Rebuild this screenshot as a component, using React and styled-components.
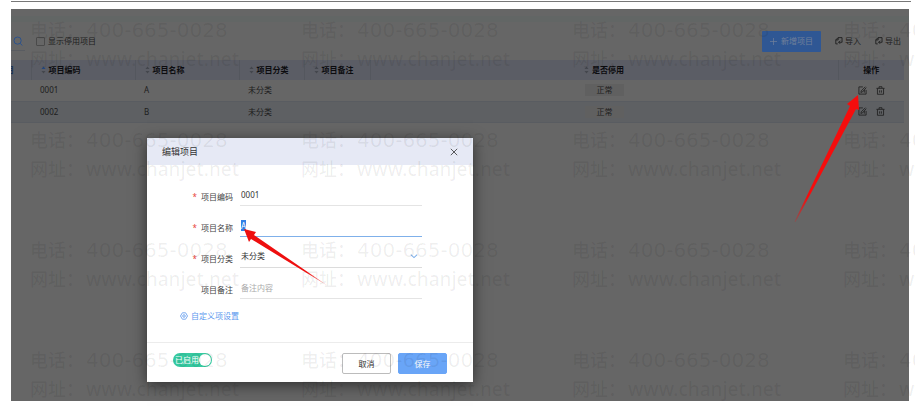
import React from 'react';
import styled, { createGlobalStyle } from 'styled-components';

const GlobalStyle = createGlobalStyle`
  * { box-sizing: border-box; }
  body {
    margin: 0;
    background: #fff;
    color: #1d1d1d;
    font: 8px/12px "Noto Sans", "Noto Sans CJK SC", sans-serif;
    overflow: hidden;
  }
  button, input, select { font: inherit; color: inherit; }
`;

const Page = styled.div`
  position: relative;
  min-height: 100vh;
  padding: 1px 4px 5px 11px;
  display: flex;
  flex-direction: column;
  overflow: hidden;
`;

const TopRule = styled.hr`
  width: 100%;
  height: 1px;
  margin: 0 0 7px;
  border: 0;
  background: #777;
  flex: none;
`;

const Screen = styled.main`
  position: relative;
  flex: 1;
  margin-right: 2px;
  background: #666;
`;

const TitleStrip = styled.div`
  height: 13px;
  border-bottom: 6px solid #626665;
`;

const Toolbar = styled.div`
  display: flex;
  align-items: center;
  height: 38px;
  padding-right: 8px;
`;

const SearchButton = styled.button`
  display: flex;
  align-items: center;
  justify-content: flex-start;
  width: 14px;
  height: 20px;
  padding: 0 2px;
  border: 0;
  border-bottom: 1px solid #595c61;
  background: none;
  color: #2c528c;
`;

const CheckLabel = styled.label`
  display: flex;
  align-items: center;
  gap: 3px;
  margin: 0 auto 0 11px;
`;

const Checkbox = styled.input`
  appearance: none;
  width: 9px;
  height: 9px;
  margin: 0;
  border: 1px solid #4a4a4a;
  border-radius: 1px;
`;

const AddButton = styled.button`
  height: 21px;
  padding: 0 8px;
  display: flex;
  align-items: center;
  gap: 4px;
  margin-right: 4px;
  border: 0;
  border-radius: 1px;
  background: #2f5794;
  color: #71809a;
`;

const TextButton = styled.button`
  display: flex;
  align-items: center;
  gap: 2px;
  margin-left: 10px;
  padding: 0;
  border: 0;
  background: none;
  white-space: nowrap;
  & + & { margin-left: 14px; }
`;

const TableArea = styled.div`
  padding-right: 5px;
`;

const Table = styled.table`
  width: 100%;
  table-layout: fixed;
  border-collapse: collapse;
`;

const Col = styled.col`
  width: ${(p) => p.$w || 'auto'};
`;

const HeadRow = styled.tr`
  height: 20px;
  background: #5b5d65;
`;

const HeadCell = styled.th`
  padding: ${(p) => (p.$flush ? 0 : '0 0 0 9px')};
  text-align: ${(p) => (p.$center ? 'center' : 'left')};
  font-weight: 600;
  color: #0c0c0f;
  border-right: ${(p) => (p.$line ? '1px solid #54575e' : 0)};
  ${(p) => p.$center && 'padding-left: 0;'}
`;

const SortLabel = styled.span`
  display: flex;
  align-items: center;
  gap: 3px;
`;

const ClippedLabel = styled.span`
  display: flex;
  justify-content: flex-end;
  width: 3px;
  overflow: hidden;
  color: #1c3052;
`;

const BodyRow = styled.tr`
  height: 21px;
  background: ${(p) => (p.$alt ? '#5e6063' : '#666')};
  border-bottom: 1px solid #595c61;
`;

const Cell = styled.td`
  padding: 0 0 0 9px;
`;

const StatusTag = styled.span`
  display: block;
  width: 39px;
  margin-left: 1px;
  background: #606060;
  text-align: center;
`;

const RowActions = styled.div`
  display: flex;
  justify-content: center;
  gap: 9px;
  margin-left: -9px;
`;

const IconButton = styled.button`
  display: flex;
  padding: 0;
  border: 0;
  background: none;
`;

const Dialog = styled.section`
  position: absolute;
  top: 129px;
  left: 136px;
  width: 326px;
  background: #fff;
  color: #333;
  box-shadow: 0 3px 14px rgba(0, 0, 0, 0.55);
`;

const DialogHeader = styled.header`
  display: flex;
  align-items: center;
  justify-content: space-between;
  height: 27px;
  padding: 0 15px;
  background: #e6e9f5;
`;

const DialogTitle = styled.h2`
  margin: 0;
  font-size: 9px;
  font-weight: 400;
`;

const DialogBody = styled.div`
  display: flex;
  flex-direction: column;
  gap: 11px;
  padding: 21px 51px 20px 33px;
`;

const Field = styled.div`
  display: grid;
  grid-template-columns: 53px 1fr;
  column-gap: 7px;
  align-items: center;
  height: 20px;
`;

const FieldLabel = styled.label`
  text-align: right;
  color: #444;
  padding-top: 2px;
`;

const Required = styled.span`
  margin-right: 4px;
  color: #e8443c;
`;

const lineControl = `
  appearance: none;
  width: 100%;
  height: 20px;
  padding: 0 0 3px 1px;
  border: 0;
  border-radius: 0;
  outline: none;
  background: none;
`;

const TextInput = styled.input`
  ${lineControl}
  border-bottom: 1px solid ${(p) => (p.$active ? '#7fb0ea' : '#e4e4e4')};
  &::placeholder { color: #aaa; opacity: 1; }
  &::selection { background: #2f7fe6; color: #fff; }
`;

const SelectBox = styled.div`
  display: grid;
  align-items: center;
  & > * { grid-area: 1 / 1; }
  & > svg { justify-self: end; margin: 0 4px 4px 0; pointer-events: none; color: #7fb0ea; }
`;

const Select = styled.select`
  ${lineControl}
  border-bottom: 1px solid #dcdcdc;
`;

const SettingsLink = styled.a`
  display: flex;
  align-items: center;
  gap: 3px;
  height: 12px;
  color: #5b97ee;
  text-decoration: none;
`;

const DialogFooter = styled.footer`
  display: flex;
  align-items: center;
  gap: 7px;
  padding: 10px 26px 8px;
  border-top: 1px solid #ececec;
`;

const Switch = styled.label`
  display: flex;
  align-items: center;
  justify-content: space-between;
  width: 39px;
  height: 14px;
  margin: 0 auto 7px 0;
  padding: 0 1px 0 2px;
  border-radius: 7px;
  background: #36c9a0;
  color: #fff;
  white-space: nowrap;
`;

const SwitchInput = styled.input`
  appearance: none;
  flex: none;
  width: 12px;
  height: 12px;
  margin: 0;
  border-radius: 50%;
  background: #fff;
`;

const FooterButton = styled.button`
  width: 49px;
  height: 21px;
  padding: 0;
  border: 1px solid ${(p) => (p.$primary ? '#69a5f7' : '#bcbcbc')};
  border-radius: 2px;
  background: ${(p) => (p.$primary ? '#69a5f7' : '#fff')};
  color: ${(p) => (p.$primary ? '#fff' : '#333')};
`;

const Watermark = styled.div`
  position: absolute;
  top: 16px;
  left: 30px;
  display: grid;
  grid-template-columns: repeat(4, 271px);
  row-gap: 52px;
  color: rgba(0, 0, 0, 0.065);
  pointer-events: none;
  user-select: none;
`;

const Mark = styled.div`
  display: grid;
  grid-template-columns: 56px auto;
  grid-auto-rows: 29px;
  line-height: 29px;
  font-size: 18px;
  font-weight: 500;
  white-space: nowrap;
`;

const MarkPhone = styled.span`
  font-family: "DejaVu Sans", sans-serif;
  font-size: 20px;
`;

const MarkUrl = styled.span`
  font-size: 19px;
`;

const Arrows = styled.svg`
  position: absolute;
  top: 0;
  left: 0;
  pointer-events: none;
`;

const Icon = ({ size = 9, sw = 1, children }) => (
  <svg width={size} height={size} viewBox="0 0 10 10" fill="none" stroke="currentColor" strokeWidth={sw} aria-hidden="true">
    {children}
  </svg>
);

const SearchIcon = () => (
  <Icon size={10}><circle cx="4.6" cy="4.6" r="3.6" /><path d="M7.2 7.4 9.4 9.5" /></Icon>
);
const PlusIcon = () => <Icon size={7}><path d="M5 0v10M0 5h10" /></Icon>;
const TransferIcon = () => (
  <Icon size={8} sw={1.1}>
    <path d="M3.4 8.6H1V3.6L3.8.8H8.8V6.4M3.9 1v2.7H1M9 6.6H4.6M6.4 4.7 4.5 6.6 6.4 8.5" />
  </Icon>
);
const EditIcon = () => (
  <Icon size={9} sw={0.9}><path d="M5.4 1H1v8h8V4.4M3.2 7.2 3.6 5.4 8.2.8M5.2 6.4 9.2 1.8M3.2 7.2 5.2 6.4M7 4.4V7.4" /></Icon>
);
const TrashIcon = () => (
  <Icon size={9} sw={0.9}><path d="M.5 2.6h9M3.4 2.4V.8h3.2v1.6M1.6 2.8v6.4h6.8V2.8M4 4.8v2.6M6 4.8v2.6" /></Icon>
);
const CloseIcon = () => <Icon size={8}><path d="M1 1l8 8M9 1 1 9" /></Icon>;
const ChevronIcon = () => <Icon size={8} sw={1.3}><path d="M1 3.4 5 7l4-3.6" /></Icon>;
const GearIcon = () => (
  <Icon size={8}><path d="M3 1h4l2.4 4L7 9H3L.6 5z" /><circle cx="5" cy="5" r="1.6" /></Icon>
);
const SortIcon = ({ active }) => (
  <svg width="5" height="8" viewBox="0 0 5 8" aria-hidden="true">
    <path d="M.5 3 2.5.6 4.5 3z" fill={active ? '#24477c' : '#44474d'} />
    <path d="M.5 5 2.5 7.4 4.5 5z" fill="#44474d" />
  </svg>
);

const SortHead = ({ label, active, line }) => (
  <HeadCell $line={line}>
    <SortLabel><SortIcon active={active} />{label}</SortLabel>
  </HeadCell>
);

const projects = [
  { code: '0001', name: 'A', group: '未分类', status: '正常' },
  { code: '0002', name: 'B', group: '未分类', status: '正常' },
];

const marks = Array.from({ length: 16 }, (_, i) => i);

export default function App() {
  const nameRef = React.useRef(null);
  React.useEffect(() => {
    nameRef.current.focus();
    nameRef.current.select();
  }, []);

  return (
    <Page>
      <GlobalStyle />
      <TopRule />
      <Screen>
        <TitleStrip />
        <Toolbar>
          <SearchButton aria-label="搜索"><SearchIcon /></SearchButton>
          <CheckLabel><Checkbox type="checkbox" />显示停用项目</CheckLabel>
          <AddButton><PlusIcon />新增项目</AddButton>
          <TextButton><TransferIcon />导入</TextButton>
          <TextButton><TransferIcon />导出</TextButton>
        </Toolbar>
        <TableArea>
          <Table>
            <colgroup>
              <Col $w="20px" /><Col $w="104px" /><Col $w="104px" /><Col $w="65px" />
              <Col $w="66px" /><Col $w="205px" /><Col /><Col $w="66px" />
            </colgroup>
            <thead>
              <HeadRow>
                <HeadCell $flush $line><ClippedLabel>目</ClippedLabel></HeadCell>
                <SortHead label="项目编码" active line />
                <SortHead label="项目名称" line />
                <SortHead label="项目分类" line />
                <SortHead label="项目备注" line />
                <HeadCell />
                <SortHead label="是否停用" line />
                <HeadCell $center>操作</HeadCell>
              </HeadRow>
            </thead>
            <tbody>
              {projects.map((p, i) => (
                <BodyRow key={p.code} $alt={i % 2 === 1}>
                  <Cell />
                  <Cell>{p.code}</Cell>
                  <Cell>{p.name}</Cell>
                  <Cell>{p.group}</Cell>
                  <Cell />
                  <Cell />
                  <Cell><StatusTag>{p.status}</StatusTag></Cell>
                  <Cell>
                    <RowActions>
                      <IconButton aria-label="编辑"><EditIcon /></IconButton>
                      <IconButton aria-label="删除"><TrashIcon /></IconButton>
                    </RowActions>
                  </Cell>
                </BodyRow>
              ))}
            </tbody>
          </Table>
        </TableArea>

        <Dialog role="dialog" aria-labelledby="dialog-title">
          <DialogHeader>
            <DialogTitle id="dialog-title">编辑项目</DialogTitle>
            <IconButton aria-label="关闭"><CloseIcon /></IconButton>
          </DialogHeader>
          <DialogBody>
            <Field>
              <FieldLabel htmlFor="code"><Required>*</Required>项目编码</FieldLabel>
              <TextInput id="code" defaultValue="0001" />
            </Field>
            <Field>
              <FieldLabel htmlFor="name"><Required>*</Required>项目名称</FieldLabel>
              <TextInput id="name" ref={nameRef} $active defaultValue="A" />
            </Field>
            <Field>
              <FieldLabel htmlFor="group"><Required>*</Required>项目分类</FieldLabel>
              <SelectBox>
                <Select id="group"><option>未分类</option></Select>
                <ChevronIcon />
              </SelectBox>
            </Field>
            <Field>
              <FieldLabel htmlFor="note">项目备注</FieldLabel>
              <TextInput id="note" placeholder="备注内容" />
            </Field>
            <SettingsLink href="#settings"><GearIcon />自定义项设置</SettingsLink>
          </DialogBody>
          <DialogFooter>
            <Switch>已启用<SwitchInput type="checkbox" role="switch" defaultChecked /></Switch>
            <FooterButton>取消</FooterButton>
            <FooterButton $primary>保存</FooterButton>
          </DialogFooter>
        </Dialog>
      </Screen>

      <Watermark aria-hidden="true">
        {marks.map((m) => (
          <Mark key={m}>
            <span>电话：</span><MarkPhone>400-665-0028</MarkPhone>
            <span>网址：</span><MarkUrl>www.chanjet.net</MarkUrl>
          </Mark>
        ))}
      </Watermark>

      <Arrows width="915" height="406" viewBox="0 0 915 406" aria-hidden="true">
        <defs>
          <linearGradient id="fadeLong" gradientUnits="userSpaceOnUse" x1="858" y1="95" x2="795" y2="222">
            <stop offset="0.8" stopColor="#f50d0d" />
            <stop offset="1" stopColor="#f50d0d" stopOpacity="0.2" />
          </linearGradient>
          <linearGradient id="fadeShort" gradientUnits="userSpaceOnUse" x1="244" y1="229" x2="328" y2="286">
            <stop offset="0.75" stopColor="#ee0f0f" />
            <stop offset="1" stopColor="#ee0f0f" stopOpacity="0.3" />
          </linearGradient>
        </defs>
        <path d="M858 95 859 110 856 109 795.5 222 794.5 221.5 850 106 847 104z" fill="url(#fadeLong)" />
        <path d="M244 229 256 232 254 235 328 286 251 239 249 242z" fill="url(#fadeShort)" />
      </Arrows>
    </Page>
  );
}
